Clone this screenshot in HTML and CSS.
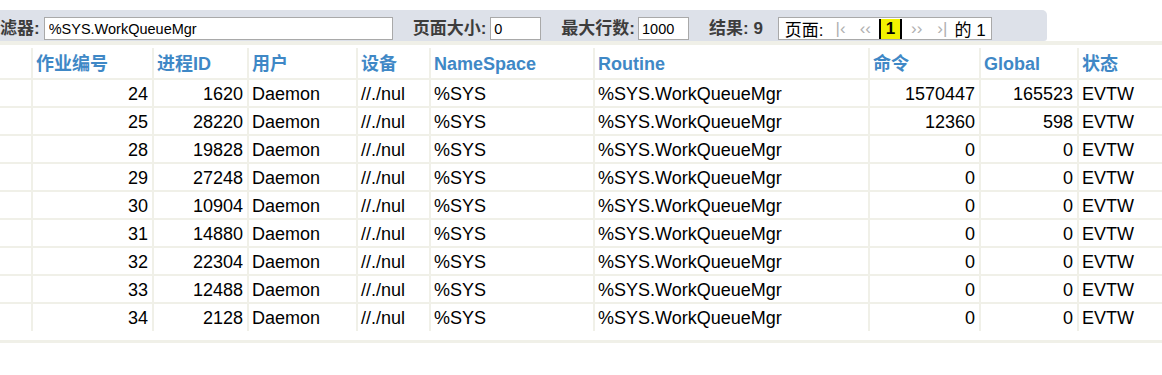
FILE: index.html
```html
<!DOCTYPE html>
<html lang="zh">
<head>
<meta charset="utf-8">
<title>作业</title>
<link rel="stylesheet" href="styles.css">
</head>
<body>
<div class="page">
  <div class="toolbar">
    <span class="lbl">滤器:</span>
    <input class="inp inp-filter" type="text" value="%SYS.WorkQueueMgr">
    <span class="lbl">页面大小:</span>
    <input class="inp inp-small" type="text" value="0">
    <span class="lbl">最大行数:</span>
    <input class="inp inp-small inp-max" type="text" value="1000">
    <span class="lbl">结果: 9</span>
    <div class="pager">
      <span class="pg-label">页面:</span>
      <span class="pg-nav pg-first">|‹</span>
      <span class="pg-nav pg-prev">‹‹</span>
      <span class="pg-cur">1</span>
      <span class="pg-nav pg-next">››</span>
      <span class="pg-nav pg-last">›|</span>
      <span class="pg-of">的 1</span>
    </div>
  </div>
  <div class="grid">
    <table class="tbl">
      <colgroup>
        <col class="c0"><col class="c1"><col class="c2"><col class="c3"><col class="c4">
        <col class="c5"><col class="c6"><col class="c7"><col class="c8"><col class="c9">
      </colgroup>
      <thead>
        <tr><th></th><th>作业编号</th><th>进程ID</th><th>用户</th><th>设备</th><th>NameSpace</th><th>Routine</th><th>命令</th><th>Global</th><th>状态</th></tr>
      </thead>
      <tbody>
        <tr><td></td><td class="num">24</td><td class="num">1620</td><td>Daemon</td><td>//./nul</td><td>%SYS</td><td>%SYS.WorkQueueMgr</td><td class="num">1570447</td><td class="num">165523</td><td>EVTW</td></tr>
        <tr><td></td><td class="num">25</td><td class="num">28220</td><td>Daemon</td><td>//./nul</td><td>%SYS</td><td>%SYS.WorkQueueMgr</td><td class="num">12360</td><td class="num">598</td><td>EVTW</td></tr>
        <tr><td></td><td class="num">28</td><td class="num">19828</td><td>Daemon</td><td>//./nul</td><td>%SYS</td><td>%SYS.WorkQueueMgr</td><td class="num">0</td><td class="num">0</td><td>EVTW</td></tr>
        <tr><td></td><td class="num">29</td><td class="num">27248</td><td>Daemon</td><td>//./nul</td><td>%SYS</td><td>%SYS.WorkQueueMgr</td><td class="num">0</td><td class="num">0</td><td>EVTW</td></tr>
        <tr><td></td><td class="num">30</td><td class="num">10904</td><td>Daemon</td><td>//./nul</td><td>%SYS</td><td>%SYS.WorkQueueMgr</td><td class="num">0</td><td class="num">0</td><td>EVTW</td></tr>
        <tr><td></td><td class="num">31</td><td class="num">14880</td><td>Daemon</td><td>//./nul</td><td>%SYS</td><td>%SYS.WorkQueueMgr</td><td class="num">0</td><td class="num">0</td><td>EVTW</td></tr>
        <tr><td></td><td class="num">32</td><td class="num">22304</td><td>Daemon</td><td>//./nul</td><td>%SYS</td><td>%SYS.WorkQueueMgr</td><td class="num">0</td><td class="num">0</td><td>EVTW</td></tr>
        <tr><td></td><td class="num">33</td><td class="num">12488</td><td>Daemon</td><td>//./nul</td><td>%SYS</td><td>%SYS.WorkQueueMgr</td><td class="num">0</td><td class="num">0</td><td>EVTW</td></tr>
        <tr><td></td><td class="num">34</td><td class="num">2128</td><td>Daemon</td><td>//./nul</td><td>%SYS</td><td>%SYS.WorkQueueMgr</td><td class="num">0</td><td class="num">0</td><td>EVTW</td></tr>
      </tbody>
    </table>
  </div>
</div>
</body>
</html>
```

FILE: styles.css
```css
html, body {
  margin: 0;
  padding: 0;
  background: #ffffff;
  overflow: hidden;
}
body {
  font-family: "Liberation Sans", "Noto Sans CJK SC", sans-serif;
  color: #000;
}
.page {
  padding-top: 10px;
}
.toolbar {
  display: flex;
  align-items: center;
  width: 1047px;
  height: 23px;
  padding: 7px 0 1px 0;
  background: #dde1e9;
  border-radius: 0 5px 3px 0;
  color: #3d3d3d;
  font-weight: bold;
  font-size: 17px;
  white-space: nowrap;
}
.lbl {
  line-height: 23px;
}
.inp {
  box-sizing: border-box;
  height: 23px;
  margin: 0 20px 0 4px;
  padding: 0 4px;
  border: 1px solid #a9a9a9;
  background: #fff;
  color: #000;
  font-family: "Liberation Sans", sans-serif;
  font-size: 14.5px;
  outline: none;
}
.inp-filter {
  width: 349px;
}
.inp-small {
  width: 51px;
  padding-left: 3px;
}
.inp-max {
  margin-left: 3px;
}
.pager {
  box-sizing: border-box;
  display: flex;
  align-items: center;
  width: 214px;
  height: 23px;
  margin-left: 15px;
  padding-left: 6px;
  border: 1px solid #a9a9a9;
  background: #fff;
  color: #000;
  font-weight: normal;
  font-size: 17px;
}
.pg-nav {
  color: #b0b0b0;
  font-size: 17px;
}
.pg-first { margin-left: 12px; }
.pg-prev { margin-left: 14px; }
.pg-cur {
  box-sizing: border-box;
  width: 23px;
  height: 20px;
  margin-left: 8px;
  background: #f2f200;
  border-left: 2px solid #000;
  border-right: 2px solid #000;
  font-weight: bold;
  text-align: center;
  line-height: 20px;
}
.pg-next { margin-left: 9px; }
.pg-last { margin-left: 15px; }
.pg-of { margin-left: 7px; }

.grid {
  border-top: 4px solid #f0f0e8;
  border-bottom: 3px solid #f0f0e8;
  padding: 3px 0 9px 0;
  overflow: hidden;
}
.tbl {
  table-layout: fixed;
  width: 1199px;
  border-collapse: separate;
  border-spacing: 0;
  font-size: 18px;
}
.c0 { width: 33px; }
.c1 { width: 121px; }
.c2 { width: 95px; }
.c3 { width: 109px; }
.c4 { width: 73px; }
.c5 { width: 164px; }
.c6 { width: 275px; }
.c7 { width: 111px; }
.c8 { width: 98px; }
.c9 { width: 120px; }
.tbl th,
.tbl td {
  padding: 2px 4px 0 3px;
  border-right: 2px solid #f0f0e8;
  border-bottom: 2px solid #f0f0e8;
  white-space: nowrap;
  overflow: hidden;
  text-align: left;
}
.tbl th {
  line-height: 28px;
  color: #3f88c6;
  font-weight: bold;
}
.tbl td {
  line-height: 24px;
}
.tbl td.num {
  text-align: right;
}
.tbl tbody tr:last-child td {
  padding-bottom: 1px;
  border-bottom: none;
}
```
